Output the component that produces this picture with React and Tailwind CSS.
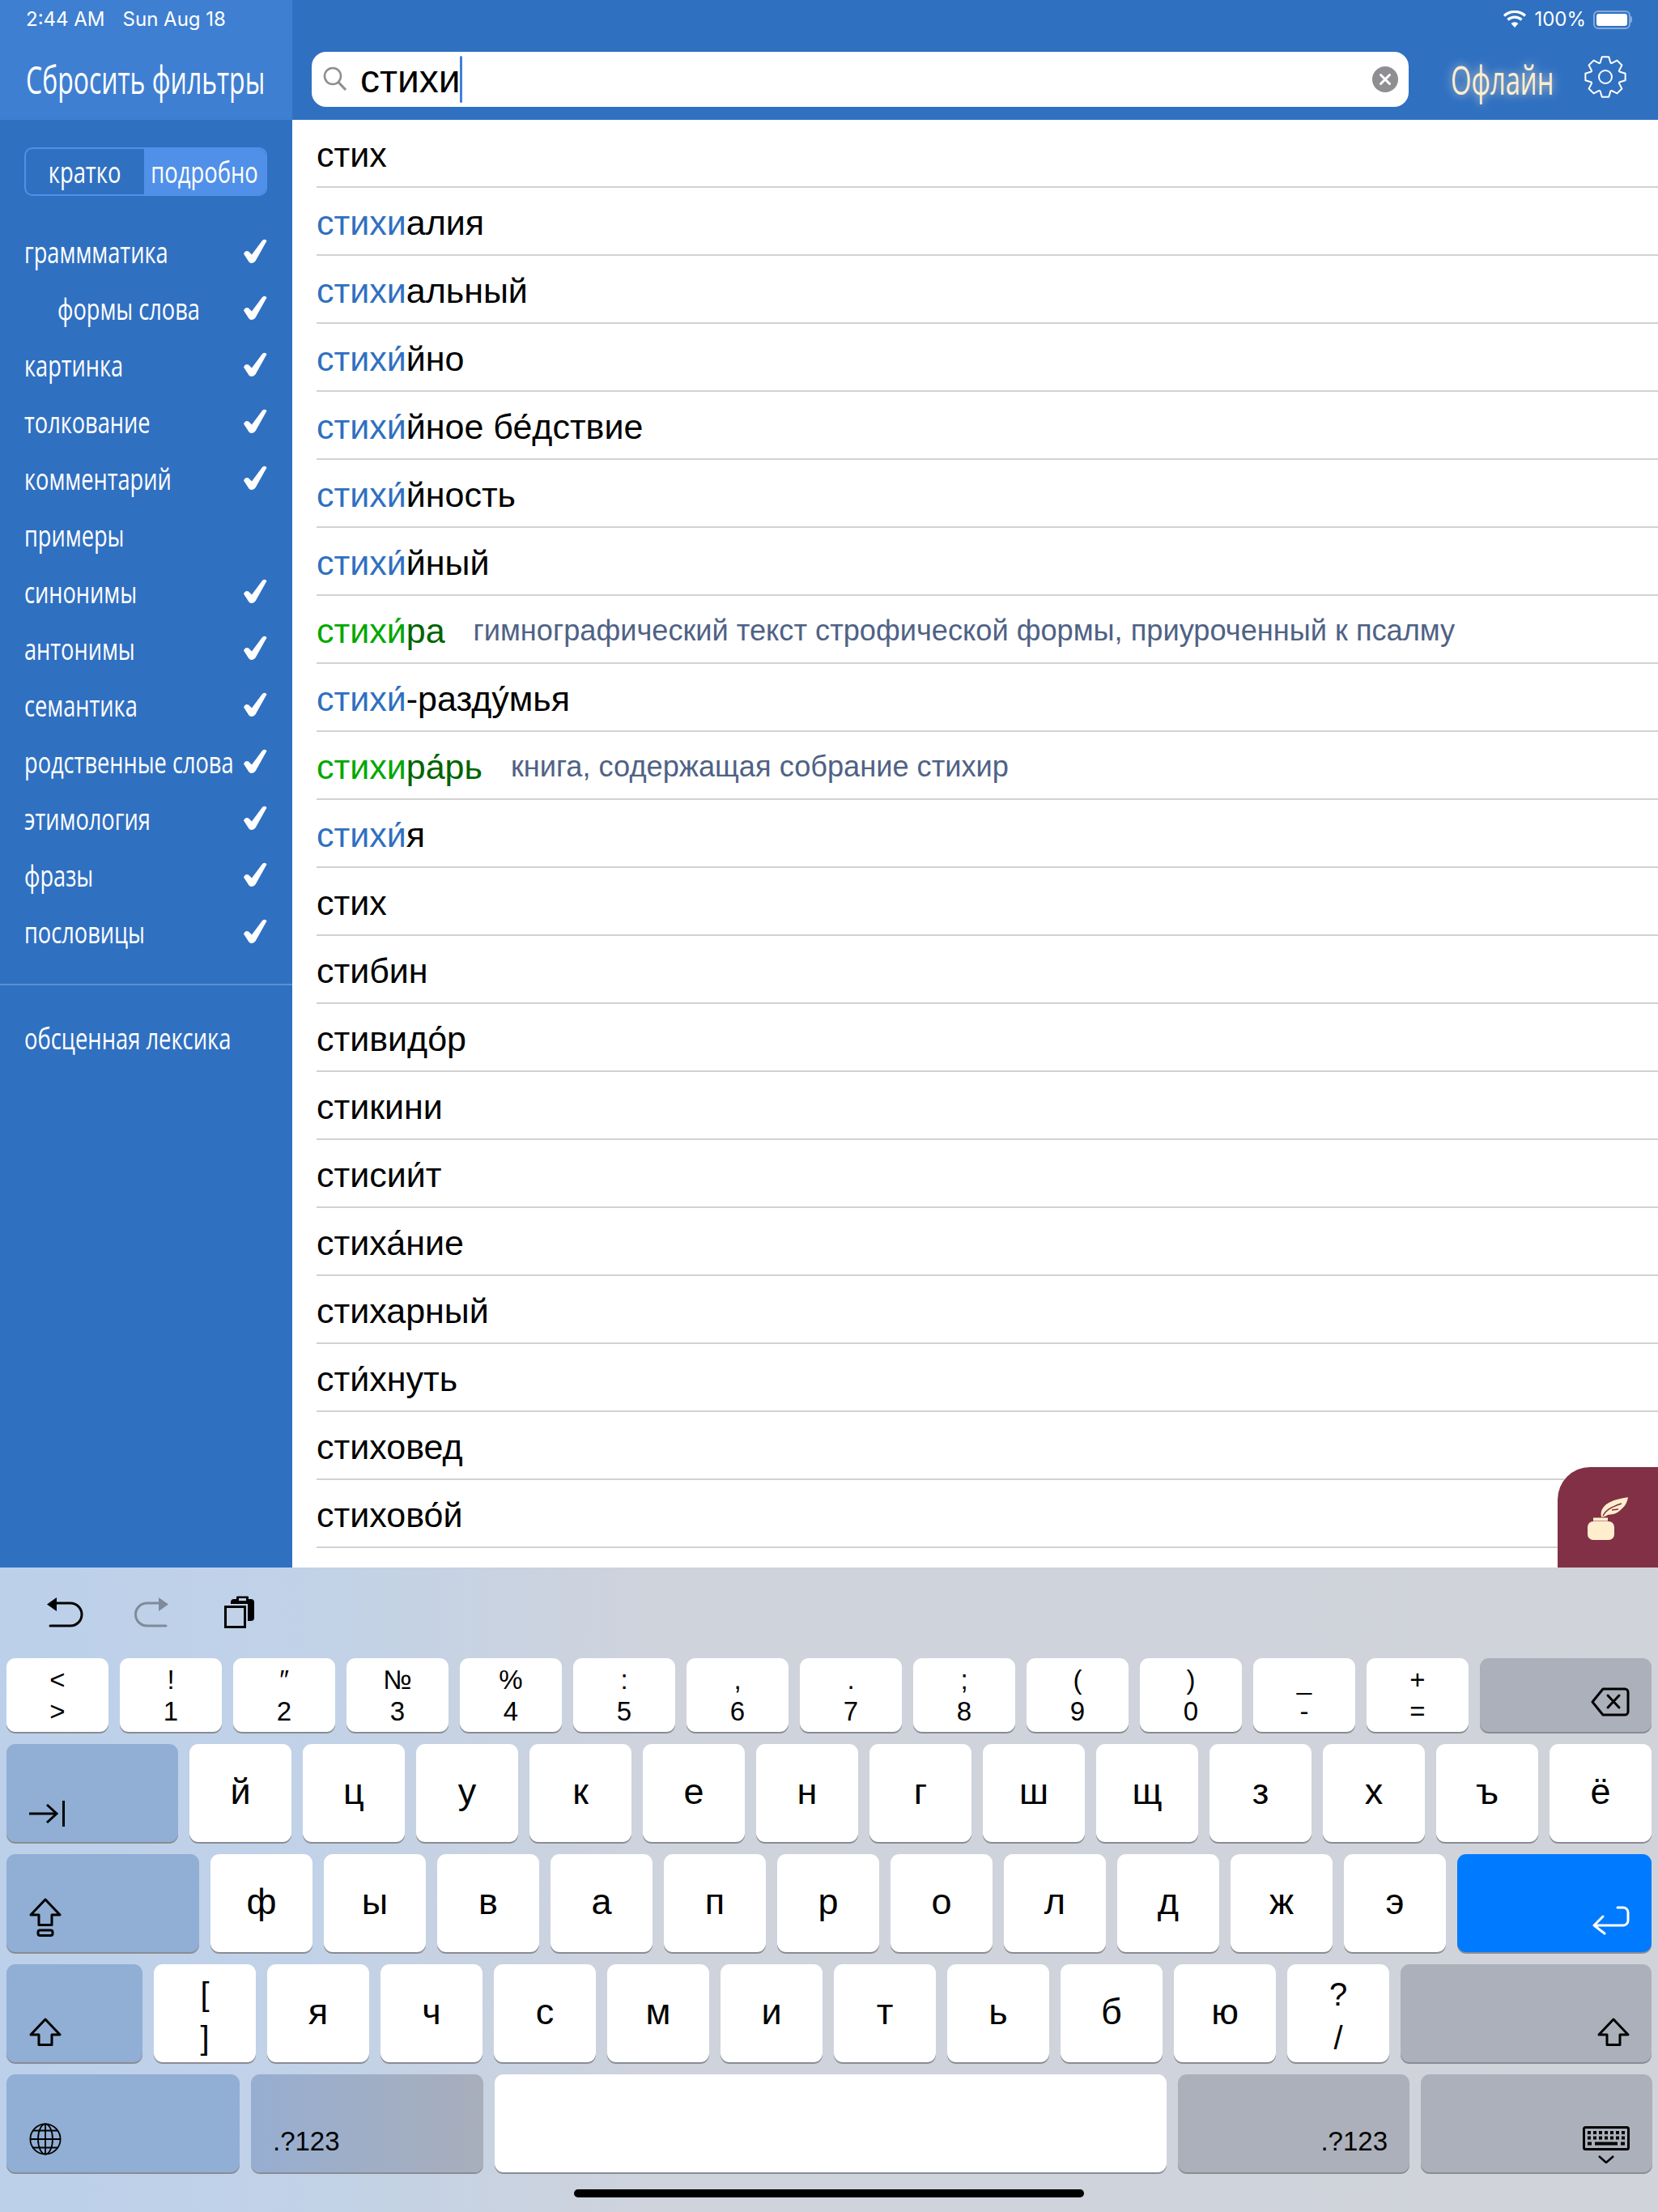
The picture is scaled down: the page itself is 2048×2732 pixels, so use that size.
import React from "react";

const filters = [
  ["граммматика", true, false],
  ["формы слова", true, true],
  ["картинка", true, false],
  ["толкование", true, false],
  ["комментарий", true, false],
  ["примеры", false, false],
  ["синонимы", true, false],
  ["антонимы", true, false],
  ["семантика", true, false],
  ["родственные слова", true, false],
  ["этимология", true, false],
  ["фразы", true, false],
  ["пословицы", true, false],
];

const B = "b";
const words = [
  [["", "стих"]],
  [[B, "стихи"], ["", "алия"]],
  [[B, "стихи"], ["", "альный"]],
  [[B, "стихи\u0301"], ["", "йно"]],
  [[B, "стихи\u0301"], ["", "йное бе\u0301дствие"]],
  [[B, "стихи\u0301"], ["", "йность"]],
  [[B, "стихи\u0301"], ["", "йный"]],
  [["g", "стихи\u0301"], ["d", "ра"]],
  [[B, "стихи\u0301"], ["", "-разду\u0301мья"]],
  [["g", "стихи"], ["d", "ра\u0301рь"]],
  [[B, "стихи\u0301"], ["", "я"]],
  [["", "стих"]],
  [["", "стибин"]],
  [["", "стивидо\u0301р"]],
  [["", "стикини"]],
  [["", "стисии\u0301т"]],
  [["", "стиха\u0301ние"]],
  [["", "стихарный"]],
  [["", "сти\u0301хнуть"]],
  [["", "стиховед"]],
  [["", "стихово\u0301й"]],
];
const notes = {
  7: "гимнографический текст строфической формы, приуроченный к псалму",
  9: "книга, содержащая собрание стихир",
};
const tone = { b: "text-[#3070c1]", g: "text-[#00a800]", d: "text-[#006400]", "": "text-black" };

function Check() {
  return (
    <svg width="30" height="32" viewBox="0 0 30 32" className="-mt-[3px] shrink-0">
      <path d="M1 18.5 Q3 13.5 7 15.5 L11 19.5 L24 2 Q27.5 -0.5 29.5 2.5 L15.5 27.5 Q11 32 7.5 28.5 Z" fill="white" />
    </svg>
  );
}

function Narrow({ children, className = "" }) {
  return <span className={"inline-block w-0 origin-left whitespace-nowrap font-['Open_Sans',sans-serif] " + className}>{children}</span>;
}

function gearPath() {
  const cx = 27, cy = 27, pts = [];
  for (let i = 0; i < 8; i++) {
    const a = (i * Math.PI) / 4 - Math.PI / 2;
    const p = (r, d) => `${(cx + r * Math.cos(a + d)).toFixed(2)} ${(cy + r * Math.sin(a + d)).toFixed(2)}`;
    pts.push(p(18.5, -0.36), p(25, -0.17), p(25, 0.17), p(18.5, 0.36));
  }
  return "M" + pts.join(" L") + " Z";
}

function Gear() {
  return (
    <svg width="54" height="54" viewBox="0 0 54 54">
      <path d={gearPath()} fill="none" stroke="white" strokeWidth="2" strokeLinejoin="round" />
      <circle cx="27" cy="27" r="8" fill="none" stroke="white" strokeWidth="2" />
    </svg>
  );
}

function Shift({ lock }) {
  return (
    <svg width="40" height={lock ? 48 : 36} viewBox={lock ? "0 0 40 48" : "0 0 40 36"} fill="none" stroke="black" strokeWidth="3" strokeLinejoin="round">
      <path d="M20 2 L38 21 H28 V33.5 H12 V21 H2 Z" />
      {lock && <rect x="11" y="40" width="18" height="6.5" rx="2.5" />}
    </svg>
  );
}

function Key({ w, h, tone: t = "bg-white", className = "", children }) {
  return (
    <div style={{ width: w, height: h }} className={"shrink-0 rounded-[11px] shadow-[0_2px_0_#898c93] " + t + " " + className}>
      {children}
    </div>
  );
}

function CharKey({ c, w = 126, h = 121 }) {
  return (
    <Key w={w} h={h} className="flex items-center justify-center text-[45px] leading-none text-black">
      <span className="-mt-[4px]">{c}</span>
    </Key>
  );
}

function PairKey({ a, b, w = 126, h = 91, big }) {
  return (
    <Key w={w} h={h} className={"flex flex-col items-center leading-none text-black " + (big ? "gap-[14px] pt-[17px] text-[40px]" : "gap-[6px] pt-[10px] text-[33px]")}>
      <span>{a}</span>
      <span>{b}</span>
    </Key>
  );
}

const numRow = [["<", ">"], ["!", "1"], ["\u2033", "2"], ["№", "3"], ["%", "4"], [":", "5"], [",", "6"], [".", "7"], [";", "8"], ["(", "9"], [")", "0"], ["_", "-"], ["+", "="]];
const blue = "bg-[#91aed4]";
const gray = "bg-[#acb0ba]";

function Row({ children }) {
  return <div className="flex gap-[14px]">{children}</div>;
}

export default function App() {
  return (
    <div className="flex h-[2732px] w-[2048px] flex-col overflow-hidden bg-white font-['Liberation_Sans',sans-serif]">
      <div className="relative flex h-[1936px] shrink-0">
        <aside className="flex w-[361px] shrink-0 flex-col bg-[#3070c1] text-white">
          <div className="flex h-[148px] flex-col bg-[#3f7fd1] pl-[32px]">
            <div className="flex h-[48px] items-center gap-[22px] font-['Inter',sans-serif] text-[24px] text-white">
              <span>2:44 AM</span>
              <span>Sun Aug 18</span>
            </div>
            <div className="mt-[10px] flex h-[80px] items-center text-[47px]">
              <Narrow className="scale-x-[0.68]">Сбросить фильтры</Narrow>
            </div>
          </div>
          <div className="ml-[30px] mt-[34px] flex h-[60px] w-[300px] overflow-hidden rounded-[10px] border-[2.5px] border-[#5090e8] text-[37px]">
            <div className="flex w-[146px] shrink-0 items-center justify-center"><span className="inline-block origin-center scale-x-[0.74] font-['Open_Sans',sans-serif]">кратко</span></div>
            <div className="flex w-0 flex-1 items-center justify-center bg-[#5090e8]"><span className="inline-block origin-center scale-x-[0.74] font-['Open_Sans',sans-serif]">подробно</span></div>
          </div>
          <div className="mt-[35px] flex flex-col pl-[30px] pr-[31px]">
            {filters.map(([t, on, sub]) => (
              <div key={t} className="flex h-[70px] items-center justify-between text-[36px]">
                <Narrow className={"scale-x-[0.755] " + (sub ? "ml-[41px]" : "")}>{t}</Narrow>
                {on && <Check />}
              </div>
            ))}
          </div>
          <div className="mt-[28px] h-[2px] bg-[#5a8fd2]" />
          <div className="flex h-[132px] items-center pl-[30px] text-[36px]">
            <Narrow className="scale-x-[0.76]">обсценная лексика</Narrow>
          </div>
        </aside>

        <main className="flex min-w-0 flex-1 flex-col">
          <header className="flex h-[148px] shrink-0 flex-col bg-[#3070c1] pl-[24px]">
            <div className="flex h-[48px] items-center justify-end gap-[9px] pr-[32px] font-['Inter',sans-serif] text-[24px] text-white">
              <svg width="30" height="22" viewBox="0 0 30 22">
                <path d="M15 21 L10.5 16 A7 7 0 0 1 19.5 16 Z" fill="white" />
                <path d="M6.5 11.5 A12.5 12.5 0 0 1 23.5 11.5 M2 6.5 A19 19 0 0 1 28 6.5" fill="none" stroke="white" strokeWidth="3.2" />
              </svg>
              <span>100%</span>
              <div className="flex items-center">
                <div className="flex h-[23px] w-[46px] items-center rounded-[6px] border-2 border-[#83a9dc] p-[2px]">
                  <div className="h-full w-full rounded-[3px] bg-white" />
                </div>
                <div className="h-[8px] w-[2px] rounded-r-[2px] bg-[#83a9dc]" />
              </div>
            </div>
            <div className="mt-[16px] flex items-start">
              <div className="flex h-[68px] w-[1355px] items-center rounded-[18px] bg-white pl-[14px] pr-[13px]">
                <svg width="30" height="34" viewBox="0 0 30 34" fill="none" stroke="#8e8e93" strokeWidth="2.6" className="shrink-0">
                  <circle cx="12" cy="13" r="10" />
                  <path d="M19 20.5 L28 30" strokeWidth="3.2" />
                </svg>
                <span className="ml-[16px] text-[48px] leading-none text-black">стихи</span>
                <span className="-ml-[1px] h-[58px] w-[3px] rounded-full bg-[#3f7fd8]" />
                <div className="ml-auto flex h-[32px] w-[32px] items-center justify-center rounded-full bg-[#8e8e93]">
                  <svg width="16" height="16" viewBox="0 0 16 16" stroke="white" strokeWidth="3" strokeLinecap="round"><path d="M2.5 2.5 L13.5 13.5 M13.5 2.5 L2.5 13.5" /></svg>
                </div>
              </div>
              <div className="ml-[52px] flex h-[68px] w-[125px] items-center text-[50px] text-[#ffeecd] [text-shadow:0_0_14px_rgba(255,238,205,0.75)]">
                <Narrow className="scale-x-[0.655]">Офлайн</Narrow>
              </div>
              <div className="ml-[39px] mt-[4px]"><Gear /></div>
            </div>
          </header>
          <div className="flex-1 overflow-hidden pl-[30px]">
            {words.map((parts, i) => (
              <div key={i} className="flex h-[84px] items-center border-b-2 border-[#d2d2d4] pt-[4px] text-[43px]">
                <span className="whitespace-nowrap">
                  {parts.map(([k, s], j) => <span key={j} className={tone[k]}>{s}</span>)}
                </span>
                {notes[i] && <span className="ml-[35px] whitespace-nowrap text-[36.2px] text-[#4f6285]">{notes[i]}</span>}
              </div>
            ))}
          </div>
        </main>

        <div className="absolute bottom-0 right-0 flex h-[124px] w-[124px] items-start rounded-tl-[40px] bg-[#813045] pl-[37px] pt-[37px]">
          <svg width="50" height="53" viewBox="0 0 50 53">
            <rect x="0" y="30" width="33" height="23" rx="7" fill="#ffeecd" />
            <rect x="7" y="25.5" width="18" height="4" fill="#ffeecd" />
            <path d="M17 24.5 C15 14 22 4 50 0.3 C49 6 47 10 44 12.7 C40 17 36 20 32 21 L25 22 C22 24 20 24.5 17 24.5 Z" fill="#ffeecd" />
            <path d="M19 23 C22 17 27 13 42 8 M30 16 L38 15" fill="none" stroke="#813045" strokeWidth="1.6" />
          </svg>
        </div>
      </div>

      <section className="flex flex-1 flex-col bg-[linear-gradient(90deg,#bcd0ea_0%,#c1d2e8_18%,#cfd3dc_40%,#d0d3da_100%)] px-[8px]">
        <div className="flex h-[112px] items-start gap-[62px] pl-[50px] pt-[32px]">
          <svg width="46" height="44" viewBox="0 0 46 44" fill="none" stroke="black" strokeWidth="3" strokeLinecap="round">
            <path d="M12 12 H29 A14 14 0 0 1 29 40 H4" />
            <path d="M12 5 V22 L0 13.5 Z" fill="black" stroke="none" />
          </svg>
          <svg width="44" height="44" viewBox="0 0 44 44" fill="none" stroke="#7f8b99" strokeWidth="3" strokeLinecap="round">
            <path d="M30 12 H15.5 A14 14 0 0 0 15.5 40 H39" />
            <path d="M30 5 V22 L42 13.5 Z" fill="#7f8b99" stroke="none" />
          </svg>
          <svg width="37" height="40" viewBox="0 0 37 40" className="ml-[5px] mt-[3px]">
            <rect x="8" y="4" width="29" height="27" rx="4" fill="black" />
            <rect x="15" y="0.5" width="15" height="8" rx="1" fill="black" />
            <rect x="18" y="3" width="9" height="3" fill="#c1d2e8" />
            <rect x="0" y="10" width="29" height="30" fill="#c1d2e8" />
            <rect x="1.5" y="13.5" width="24" height="25" fill="none" stroke="black" strokeWidth="3" />
          </svg>
        </div>
        <div className="flex flex-col gap-[15px]">
          <Row>
            {numRow.map(([a, b]) => <PairKey key={b} a={a} b={b} />)}
            <Key w={212} h={91} tone={gray} className="flex items-end justify-end pb-[19px] pr-[27px]">
              <svg width="48" height="36" viewBox="0 0 48 36" fill="none" stroke="black" strokeWidth="3" strokeLinejoin="round">
                <path d="M15 2 H42 A4 4 0 0 1 46 6 V30 A4 4 0 0 1 42 34 H15 L2 18 Z" />
                <path d="M21 10 L35 25 M35 10 L21 25" strokeLinecap="round" />
              </svg>
            </Key>
          </Row>
          <Row>
            <Key w={212} h={121} tone={blue} className="flex items-end pb-[19px] pl-[28px]">
              <svg width="44" height="32" viewBox="0 0 44 32" fill="none" stroke="black" strokeWidth="3"><path d="M0 16 H34 M22 5 L34 16 L22 27 M42.5 0 V32" /></svg>
            </Key>
            {[..."йцукенгшщзхъё"].map((c) => <CharKey key={c} c={c} />)}
          </Row>
          <Row>
            <Key w={238} h={121} tone={blue} className="flex items-end pb-[19px] pl-[28px]"><Shift lock /></Key>
            {[..."фывапролджэ"].map((c) => <CharKey key={c} c={c} />)}
            <Key w={240} h={121} tone="bg-[#007aff]" className="flex items-end justify-end pb-[21px] pr-[26px]">
              <svg width="48" height="36" viewBox="0 0 48 36" fill="none" stroke="white" strokeWidth="3" strokeLinecap="round" strokeLinejoin="round"><path d="M32 2 H39 A6 6 0 0 1 45 8 V18 A6 6 0 0 1 39 24 H3 M14 13 L3 24 L16 34" /></svg>
            </Key>
          </Row>
          <Row>
            <Key w={168} h={121} tone={blue} className="flex items-end pb-[19px] pl-[28px]"><Shift /></Key>
            <PairKey a="[" b="]" h={121} big />
            {[..."ячсмитьбю"].map((c) => <CharKey key={c} c={c} />)}
            <PairKey a="?" b="/" h={121} big />
            <Key w={310} h={121} tone={gray} className="flex items-end justify-end pb-[19px] pr-[27px]"><Shift /></Key>
          </Row>
          <Row>
            <Key w={288} h={121} tone={blue} className="flex items-end pb-[21px] pl-[28px]">
              <svg width="40" height="40" viewBox="0 0 40 40" fill="none" stroke="black" strokeWidth="1.8">
                <circle cx="20" cy="20" r="18.6" />
                <ellipse cx="20" cy="20" rx="9" ry="18.6" />
                <path d="M20 1.4 V38.6 M1.4 20 H38.6 M4.5 9.5 H35.5 M4.5 30.5 H35.5" />
              </svg>
            </Key>
            <Key w={287} h={121} tone="bg-[linear-gradient(90deg,#97aed1,#a8aebb)]" className="flex items-end pb-[22px] pl-[27px] text-[33px] leading-none text-black">.?123</Key>
            <Key w={830} h={121} />
            <Key w={286} h={121} tone={gray} className="flex items-end justify-end pb-[22px] pr-[27px] text-[33px] leading-none text-black">.?123</Key>
            <Key w={286} h={121} tone={gray} className="flex flex-col items-end justify-end pb-[11px] pr-[28px]">
              <svg width="58" height="46" viewBox="0 0 58 46" fill="none" stroke="black">
                <rect x="1.5" y="1.5" width="55" height="27" rx="2" strokeWidth="3" />
                <path d="M6 8 H52 M6 14.5 H52" strokeWidth="4" strokeDasharray="4 3" />
                <path d="M6 21.5 H11 M15 21.5 H43 M47 21.5 H52" strokeWidth="4" />
                <path d="M20 37 L29 45 L38 37" strokeWidth="2.5" />
              </svg>
            </Key>
          </Row>
        </div>
        <div className="mx-auto mt-[21px] h-[10px] w-[630px] rounded-full bg-black" />
      </section>
    </div>
  );
}
